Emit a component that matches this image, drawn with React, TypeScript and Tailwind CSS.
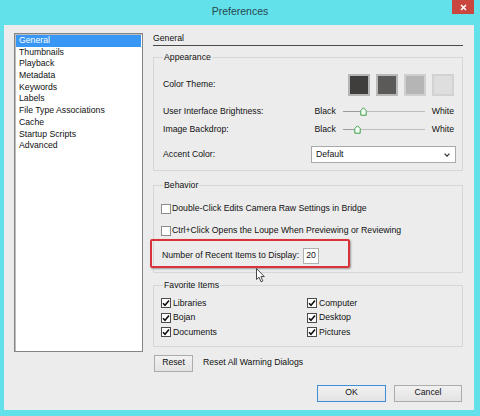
import type { ReactNode } from "react";

const listItems = [
  "General",
  "Thumbnails",
  "Playback",
  "Metadata",
  "Keywords",
  "Labels",
  "File Type Associations",
  "Cache",
  "Startup Scripts",
  "Advanced",
];

const favorites = [
  ["Libraries", "Computer"],
  ["Bojan", "Desktop"],
  ["Documents", "Pictures"],
];

function Checkbox({ checked }: { checked?: boolean }) {
  return (
    <span
      className={`flex h-[10px] w-[10px] shrink-0 items-center justify-center border bg-white ${
        checked ? "border-[#4a4a4a]" : "border-[#8c8c8c]"
      }`}
    >
      {checked && (
        <svg width="8" height="8" viewBox="0 0 8 8">
          <path d="M1 4.2 L3 6.3 L7 1.6" fill="none" stroke="#111" strokeWidth="1.6" />
        </svg>
      )}
    </span>
  );
}

function Group({ title, className, children }: { title: string; className?: string; children: ReactNode }) {
  return (
    <fieldset className={`border border-[#d6d6d6] px-[8px] ${className ?? ""}`}>
      <legend className="ml-[1px] px-[1px] leading-[11px]">{title}</legend>
      {children}
    </fieldset>
  );
}

function Slider({ pos }: { pos: number }) {
  return (
    <div className="flex items-center justify-end gap-[7px]">
      <span>Black</span>
      <div className="flex h-[10px] w-[82px] items-center">
        <div className="h-[1px] bg-[#9a9a9a]" style={{ width: pos }} />
        <svg width="7" height="9" viewBox="0 0 7 9" className="shrink-0">
          <path d="M3.5 0.8 L6.2 3.5 L6.2 8.2 L0.8 8.2 L0.8 3.5 Z" fill="#f4fff4" stroke="#3f9a4a" strokeWidth="1" />
        </svg>
        <div className="h-[1px] flex-1 bg-[#bdbdbd]" />
      </div>
      <span>White</span>
    </div>
  );
}

export default function App() {
  return (
    <div className="flex h-[416px] w-[480px] flex-col bg-[#62e1ea] text-[8.7px] text-[#111] [font-family:'Liberation_Sans',Arial,sans-serif]">
      <div className="flex h-[25px] items-start justify-between">
        <div className="ml-[6px] w-[22px]" />
        <div className="mt-[4px] text-[10.5px] text-[#27474c]">Preferences</div>
        <div className="mr-[6px] flex h-[14px] w-[22px] items-center justify-center bg-[#c9473f]">
          <svg width="7" height="7" viewBox="0 0 7 7">
            <path d="M1 1 L6 6 M6 1 L1 6" stroke="#fff" strokeWidth="1.6" />
          </svg>
        </div>
      </div>

      <div className="ml-[4px] flex h-[385px] w-[470px] gap-[10px] bg-[#ececec] pl-[10px] pt-[8px]">
        <div className="h-[319px] w-[129px] border border-[#858585] bg-white p-[1px] shadow-[inset_1px_1px_0_#bdbdbd]">
          {listItems.map((item, i) => (
            <div
              key={item}
              className={`h-[11.7px] pl-[3px] leading-[11.7px] ${i === 0 ? "bg-[#3897f5] text-white" : ""}`}
            >
              {item}
            </div>
          ))}
        </div>

        <div className="relative flex w-[310px] flex-col">
          <div className="h-[13px] border-b border-[#4a4a4a] leading-[11px]">General</div>

          <Group title="Appearance" className="mt-[6px] pb-[7px]">
            <div className="mt-[11px] flex h-[22px] items-center justify-between">
              <span className="pl-[1px]">Color Theme:</span>
              <div className="flex gap-[6px]">
                <div className="h-[22px] w-[22px] border-2 border-[#b5b5b5] bg-[#403e3d]" />
                <div className="h-[22px] w-[22px] border-2 border-[#b9b9b9] bg-[#5b5a59]" />
                <div className="h-[22px] w-[22px] border-2 border-[#cfcfcf] bg-[#b5b5b5]" />
                <div className="h-[22px] w-[22px] border-2 border-[#d2d2d2] bg-[#dedede]" />
              </div>
            </div>
            <div className="mt-[9px] flex h-[14px] items-center justify-between">
              <span className="pl-[1px]">User Interface Brightness:</span>
              <Slider pos={17} />
            </div>
            <div className="mt-[4px] flex h-[14px] items-center justify-between">
              <span className="pl-[1px]">Image Backdrop:</span>
              <Slider pos={11} />
            </div>
            <div className="mt-[9px] flex h-[17px] items-center justify-between">
              <span className="pl-[1px]">Accent Color:</span>
              <div className="-mr-[2px] flex h-[17px] w-[145px] items-center justify-between border border-[#a9a9a9] bg-white pl-[4px] pr-[5px]">
                <span>Default</span>
                <svg width="6" height="4" viewBox="0 0 6 4">
                  <path d="M0.6 0.6 L3 3.2 L5.4 0.6" fill="none" stroke="#333" strokeWidth="1.2" />
                </svg>
              </div>
            </div>
          </Group>

          <Group title="Behavior" className="mt-[9px] pb-[8px]">
            <div className="-ml-[1px] mt-[12px] flex h-[12px] items-center gap-[1px]">
              <Checkbox />
              <span>Double-Click Edits Camera Raw Settings in Bridge</span>
            </div>
            <div className="-ml-[1px] mt-[10px] flex h-[12px] items-center gap-[1px]">
              <Checkbox />
              <span>Ctrl+Click Opens the Loupe When Previewing or Reviewing</span>
            </div>
            <div className="mt-[11px] flex h-[16px] items-center gap-[4px]">
              <span>Number of Recent Items to Display:</span>
              <div className="flex h-[16px] w-[16px] items-center justify-center border border-[#b0b0b0] bg-white">
                20
              </div>
            </div>
          </Group>

          <Group title="Favorite Items" className="mt-[7px] pb-[6px]">
            <div className="-ml-[1px] mt-[5px] grid grid-cols-[146px_1fr]">
              {favorites.flat().map((name) => (
                <div key={name} className="flex h-[14.5px] items-center gap-[2px]">
                  <Checkbox checked />
                  <span>{name}</span>
                </div>
              ))}
            </div>
          </Group>

          <div className="mt-[8px] flex items-center gap-[10px] pl-[1px]">
            <button className="h-[17px] w-[39px] border border-[#acacac] bg-gradient-to-b from-[#f2f2f2] to-[#e3e3e3]">
              Reset
            </button>
            <span>Reset All Warning Dialogs</span>
          </div>

          <div className="mr-[1px] mt-[13px] flex justify-end gap-[8px]">
            <button className="h-[17px] w-[69px] border border-[#3c8fd6] bg-gradient-to-b from-[#f1f1f1] to-[#e3e3e3]">
              OK
            </button>
            <button className="h-[17px] w-[68px] border border-[#acacac] bg-gradient-to-b from-[#f1f1f1] to-[#e3e3e3]">
              Cancel
            </button>
          </div>

          <div className="pointer-events-none absolute left-[-3px] top-[206px] h-[29px] w-[200px] rounded-[2px] border-2 border-[#d9323b] shadow-[1px_1px_2px_rgba(0,0,0,0.35)]" />
          <svg
            className="pointer-events-none absolute left-[103px] top-[235px]"
            width="10"
            height="15"
            viewBox="0 0 10 15"
          >
            <path d="M0.5 0.5 L0.5 11.5 L3 9.2 L5 13.8 L6.8 13 L4.9 8.6 L8.3 8.6 Z" fill="#fff" stroke="#333" strokeWidth="0.9" />
          </svg>
        </div>
      </div>
    </div>
  );
}
